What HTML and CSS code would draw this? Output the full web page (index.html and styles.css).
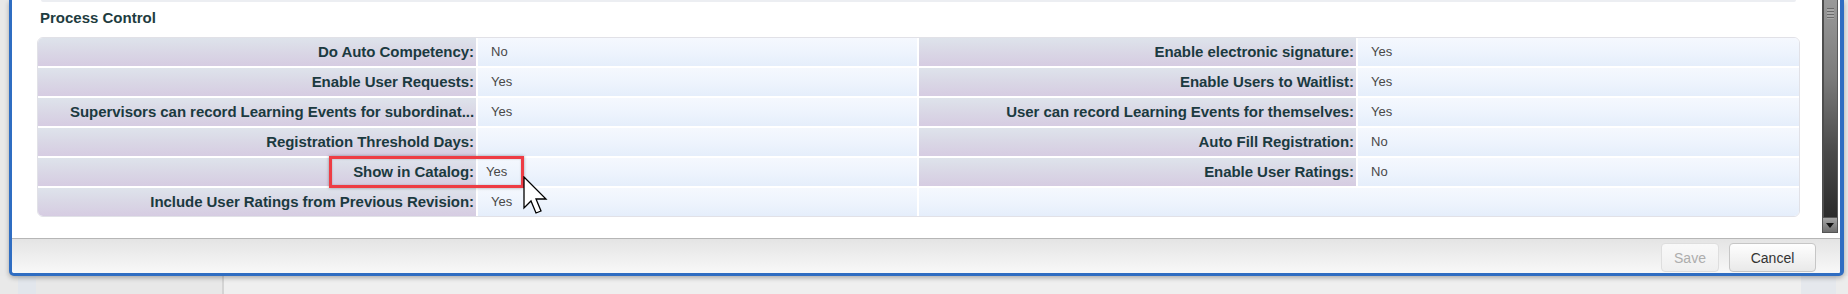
FILE: index.html
```html
<!DOCTYPE html>
<html lang="en">
<head>
<meta charset="utf-8">
<title>Process Control</title>
<link rel="stylesheet" href="styles.css">
</head>
<body>
<div class="window">
  <div class="window-body">
    <div class="scroll-content">
      <div class="prev-edge"></div>
      <h2 class="section-title">Process Control</h2>
      <div class="table-wrap">
        <div class="grid">
          <div class="lbl">Do Auto Competency:</div>
          <div class="val">No</div>
          <div class="lbl">Enable electronic signature:</div>
          <div class="val">Yes</div>

          <div class="lbl">Enable User Requests:</div>
          <div class="val">Yes</div>
          <div class="lbl">Enable Users to Waitlist:</div>
          <div class="val">Yes</div>

          <div class="lbl">Supervisors can record Learning Events for subordinat...</div>
          <div class="val">Yes</div>
          <div class="lbl">User can record Learning Events for themselves:</div>
          <div class="val">Yes</div>

          <div class="lbl">Registration Threshold Days:</div>
          <div class="val"></div>
          <div class="lbl">Auto Fill Registration:</div>
          <div class="val">No</div>

          <div class="lbl">Show in Catalog:</div>
          <div class="val val-tight">Yes</div>
          <div class="lbl">Enable User Ratings:</div>
          <div class="val">No</div>

          <div class="lbl">Include User Ratings from Previous Revision:</div>
          <div class="val">Yes</div>
          <div class="val val-span"></div>
        </div>
        <div class="highlight"></div>
        <svg class="cursor" width="26" height="40" viewBox="0 0 26 40" aria-hidden="true">
          <polygon points="1,1 1,32 8,25 13,37 18,35 13,23 23,23" fill="#ffffff" stroke="#000000" stroke-width="1.3" stroke-linejoin="miter"/>
        </svg>
      </div>
    </div>
    <div class="scrollbar">
      <div class="thumb"><span class="grip"></span></div>
      <div class="arrow-down"><span class="tri"></span></div>
    </div>
  </div>
  <div class="footer">
    <button class="btn btn-disabled" type="button">Save</button>
    <button class="btn btn-cancel" type="button">Cancel</button>
  </div>
</div>
<div class="below">
  <div class="b-edge"></div>
  <div class="b-nav"></div>
  <div class="b-side"></div>
  <div class="b-line"></div>
  <div class="b-main"></div>
  <div class="b-right"></div>
  <div class="b-end"></div>
</div>
</body>
</html>
```

FILE: styles.css
```css
html, body {
  margin: 0;
  padding: 0;
}

body {
  width: 1848px;
  height: 294px;
  overflow: hidden;
  background: #e8e8e8;
  font-family: "Liberation Sans", Arial, sans-serif;
}

.window {
  position: relative;
  z-index: 1;
  box-sizing: border-box;
  width: 1835px;
  margin-left: 9px;
  background: #ffffff;
  border-left: 3px solid #2f6dc2;
  border-right: 4px solid #2f6dc2;
  border-bottom: 3px solid #2f6dc2;
  border-radius: 0 0 5px 5px;
  box-shadow: 0 2px 5px rgba(0, 0, 0, 0.28);
}

.window-body {
  display: flex;
  height: 238px;
}

.scroll-content {
  flex: 1;
  padding-left: 25px;
}

.prev-edge {
  width: 1755px;
  height: 2px;
  margin-left: 4px;
  background: #eceef2;
  border-radius: 0 0 4px 4px;
}

.section-title {
  margin: 7px 0 0 3px;
  font-size: 15px;
  line-height: 18px;
  font-weight: bold;
  color: #1e3c40;
}

.table-wrap {
  position: relative;
  width: 1763px;
  box-sizing: border-box;
  margin-top: 10px;
  border: 1px solid #e1e1e7;
  border-radius: 6px;
  background: #ffffff;
}

.grid {
  display: grid;
  grid-template-columns: 438px 439px 437px 1fr;
  grid-auto-rows: 28px;
  gap: 2px;
  border-radius: 5px;
  overflow: hidden;
}

.lbl {
  padding-right: 2px;
  text-align: right;
  font-size: 15px;
  line-height: 28px;
  font-weight: bold;
  letter-spacing: -0.05px;
  color: #1b3a40;
  white-space: nowrap;
  overflow: hidden;
  background: linear-gradient(to bottom, #dee3eb 0%, #d9d6e5 55%, #d6cce2 100%);
}

.val {
  padding-left: 13px;
  font-size: 13px;
  line-height: 28px;
  color: #484848;
  white-space: nowrap;
  overflow: hidden;
  background: linear-gradient(to bottom, #f5f8fe 0%, #eef4fd 50%, #e5eefb 100%);
}

.val-tight {
  padding-left: 8px;
}

.val-span {
  grid-column: span 2;
}

.highlight {
  position: absolute;
  left: 291px;
  top: 118px;
  width: 195px;
  height: 32px;
  box-sizing: border-box;
  border: 3px solid #ee3c44;
  box-shadow: 0 0 3px rgba(0, 0, 0, 0.35), inset 0 0 2px rgba(0, 0, 0, 0.25);
}

.cursor {
  position: absolute;
  left: 485px;
  top: 138px;
}

.scrollbar {
  display: flex;
  flex-direction: column;
  width: 16px;
  height: 233px;
  margin-right: 2px;
}

.thumb {
  flex: 1;
  box-sizing: border-box;
  border-left: 2px solid #4e4e4e;
  border-right: 1px solid #5a5a5a;
  background: linear-gradient(to bottom, #9a9a9a 0%, #7c7c7c 35%, #4a4a4a 70%, #2b2b2b 100%);
  display: flex;
  justify-content: center;
  padding-top: 8px;
}

.grip {
  width: 7px;
  height: 11px;
  background: repeating-linear-gradient(to bottom, #6a6a6a 0, #6a6a6a 1px, #a8a8a8 1px, #a8a8a8 3px);
}

.arrow-down {
  height: 16px;
  box-sizing: border-box;
  border: 1px solid #555555;
  background: linear-gradient(to bottom, #a4a4a4, #6e6e6e);
  display: flex;
  align-items: center;
  justify-content: center;
}

.tri {
  width: 0;
  height: 0;
  border-left: 4px solid transparent;
  border-right: 4px solid transparent;
  border-top: 5px solid #111111;
}

.footer {
  display: flex;
  justify-content: flex-end;
  align-items: flex-end;
  gap: 10px;
  box-sizing: border-box;
  height: 35px;
  padding: 0 24px 1px 0;
  border-top: 1px solid #b6b6b6;
  background: linear-gradient(to bottom, #e4e4e4 0%, #f0f0f0 60%, #f8f8f8 100%);
  border-radius: 0 0 3px 3px;
}

.btn {
  box-sizing: border-box;
  height: 29px;
  padding: 0;
  border-radius: 4px;
  font-family: "Liberation Sans", Arial, sans-serif;
  font-size: 14px;
}

.btn-disabled {
  width: 58px;
  color: #adadad;
  border: 1px solid #dedede;
  background: linear-gradient(to bottom, #f9f9f9, #efefef);
}

.btn-cancel {
  width: 87px;
  color: #333333;
  border: 1px solid #c6c6c6;
  background: linear-gradient(to bottom, #fefefe, #e9e9e9);
}

.below {
  display: flex;
  height: 18px;
}

.b-edge {
  width: 18px;
  background: #e9e9e9;
}

.b-nav {
  width: 18px;
  background: #e2e6ec;
}

.b-side {
  width: 186px;
  background: #e8e8e8;
}

.b-line {
  width: 2px;
  background: #d4d4d4;
}

.b-main {
  width: 1577px;
  background: #efefef;
}

.b-right {
  width: 35px;
  background: #e5e8ed;
}

.b-end {
  flex: 1;
  background: #ececec;
}
```
